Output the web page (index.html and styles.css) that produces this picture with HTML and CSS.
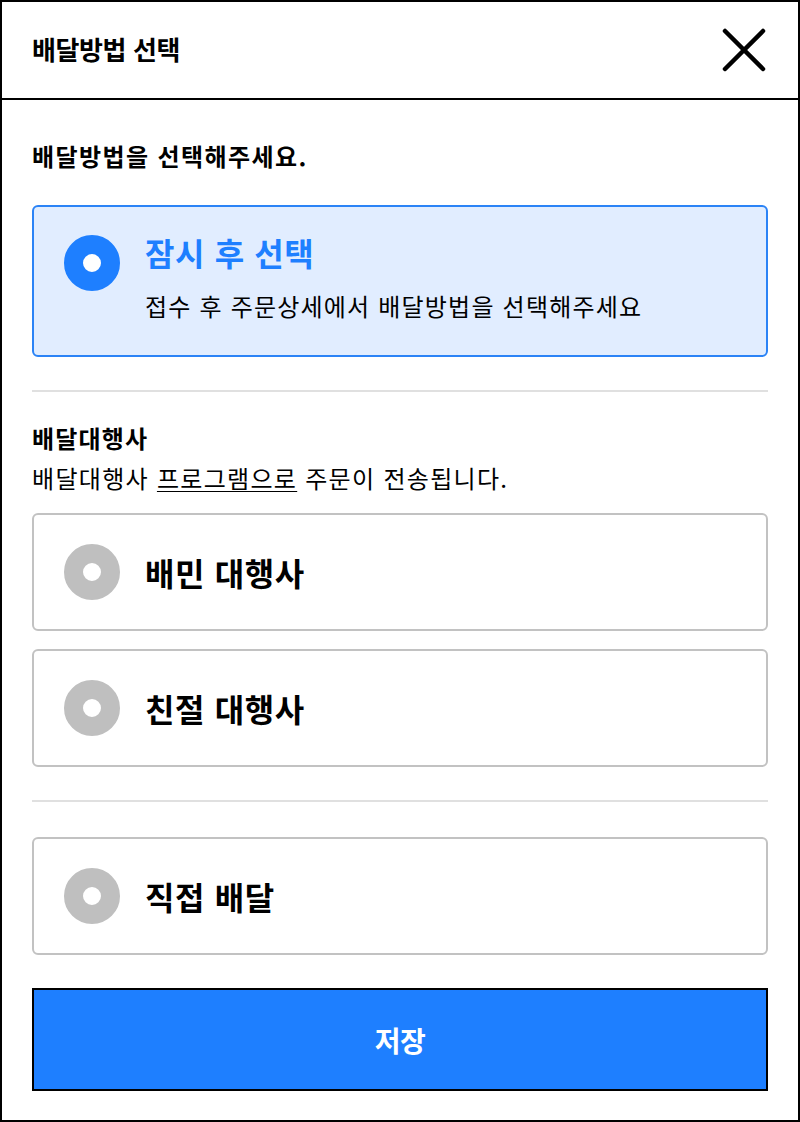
FILE: index.html
```html
<!DOCTYPE html>
<html lang="ko">
<head>
<meta charset="utf-8">
<link rel="stylesheet" href="styles.css">
</head>
<body>
<div class="modal">
  <header class="modal-header">
    <h1 class="modal-title">배달방법 선택</h1>
    <button class="close-btn" aria-label="닫기">
      <svg width="44" height="44" viewBox="0 0 44 44"><path d="M3 3 L41 41 M41 3 L3 41" stroke="#000" stroke-width="4.5" stroke-linecap="round" fill="none"/></svg>
    </button>
  </header>
  <div class="modal-body">
    <p class="lead">배달방법을 선택해주세요.</p>
    <div class="option option-selected option-tall">
      <span class="radio radio-on"></span>
      <div class="option-text">
        <div class="option-title option-title-blue">잠시 후 선택</div>
        <div class="option-desc">접수 후 주문상세에서 배달방법을 선택해주세요</div>
      </div>
    </div>
    <hr class="divider divider-1">
    <div class="section">
      <div class="section-title">배달대행사</div>
      <div class="section-desc">배달대행사 <u>프로그램으로</u> 주문이 전송됩니다.</div>
    </div>
    <div class="option-group">
      <div class="option">
        <span class="radio"></span>
        <div class="option-title">배민 대행사</div>
      </div>
      <div class="option">
        <span class="radio"></span>
        <div class="option-title">친절 대행사</div>
      </div>
    </div>
    <hr class="divider divider-2">
    <div class="option option-direct">
      <span class="radio"></span>
      <div class="option-title">직접 배달</div>
    </div>
    <button class="save-btn">저장</button>
  </div>
</div>
</body>
</html>
```

FILE: styles.css
```css
* { box-sizing: border-box; }
html, body { margin: 0; padding: 0; background: #fff; }
body {
  font-family: "Noto Sans CJK KR", "Noto Sans", sans-serif;
  color: #000;
}
.modal {
  width: 800px;
  height: 1122px;
  border: 2px solid #000;
  display: flex;
  flex-direction: column;
}
.modal-header {
  flex: none;
  height: 98px;
  border-bottom: 2px solid #000;
  display: flex;
  align-items: center;
  justify-content: space-between;
  padding: 0 32px 0 30px;
}
.modal-title {
  margin: 0 0 3px;
  font-size: 26px;
  font-weight: 700;
  letter-spacing: -0.4px;
  line-height: 34px;
}
.close-btn {
  border: 0;
  background: none;
  padding: 0;
  width: 44px;
  height: 44px;
  display: block;
}
.close-btn svg { display: block; }
.modal-body {
  padding: 0 30px;
  display: flex;
  flex-direction: column;
}
.modal-body > * { flex: none; }
.lead {
  margin: 40px 0 0;
  font-size: 24px;
  font-weight: 700;
  line-height: 32px;
  letter-spacing: 1.4px;
}
.option {
  margin-top: 31px;
  height: 118px;
  border: 2px solid #c2c2c2;
  border-radius: 6px;
  display: flex;
  align-items: center;
  padding: 0 30px;
  gap: 25px;
}
.option-tall {
  margin-top: 33px;
  height: 152px;
  align-items: flex-start;
  padding-top: 28px;
}
.option-direct { margin-top: 35px; }
.option-selected {
  border-color: #2b83f6;
  background: #e1edff;
}
.radio {
  flex: none;
  width: 56px;
  height: 56px;
  border-radius: 50%;
  border: 19px solid #bfbfbf;
  background: #fff;
}
.radio-on { border-color: #1e7fff; }
.option-text {
  display: flex;
  flex-direction: column;
  gap: 18px;
  margin-top: -3px;
}
.option-title {
  font-size: 32px;
  font-weight: 700;
  line-height: 40px;
  letter-spacing: 0.6px;
}
.option-title-blue { color: #1e7fff; }
.option-desc {
  font-size: 24px;
  line-height: 32px;
  letter-spacing: 1.2px;
}
.divider {
  border: 0;
  height: 2px;
  background: #e0e0e0;
  margin: 33px 0 0;
}
.section { margin-top: 30px; display: flex; flex-direction: column; gap: 8px; }
.section-title {
  font-size: 24px;
  font-weight: 700;
  line-height: 32px;
  letter-spacing: 1.2px;
}
.section-desc {
  font-size: 24px;
  line-height: 32px;
  letter-spacing: 1.3px;
}
.section-desc u { text-underline-offset: 3px; text-decoration-thickness: 1px; }
.option-group { display: flex; flex-direction: column; gap: 18px; padding-top: 19px; }
.option-group .option { margin-top: 0; }
.save-btn {
  margin-top: 33px;
  height: 103px;
  width: 100%;
  background: #1e7fff;
  border: 2px solid #000;
  color: #fff;
  font-family: inherit;
  font-size: 28px;
  font-weight: 700;
  letter-spacing: -0.5px;
}
```
